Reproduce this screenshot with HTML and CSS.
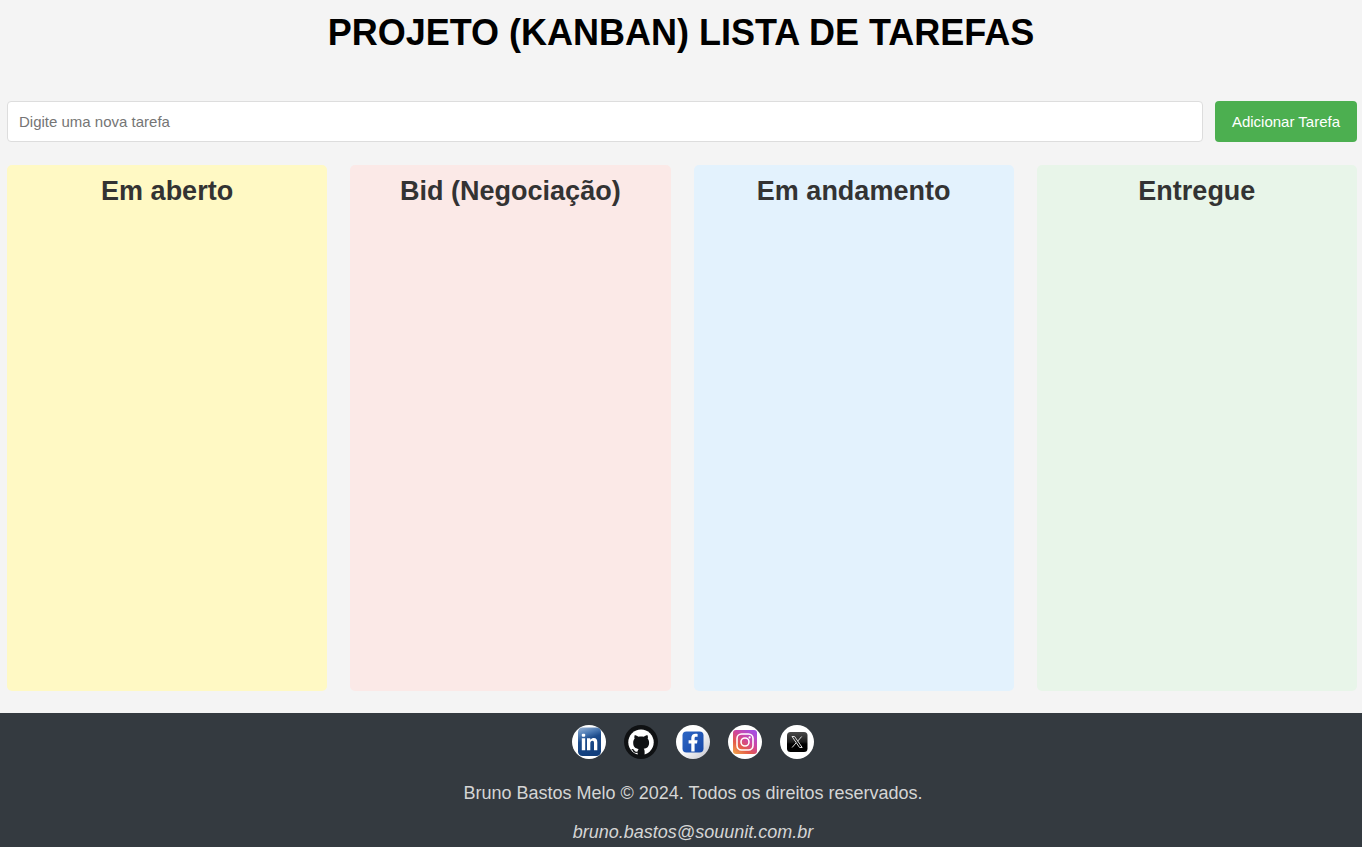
FILE: index.html
```html
<!DOCTYPE html>
<html lang="pt-BR">
<head>
<meta charset="utf-8">
<meta name="viewport" content="width=device-width, initial-scale=1">
<title>Projeto (Kanban) Lista de Tarefas</title>
<link rel="stylesheet" href="styles.css">
</head>
<body>
<header class="header"><h1 class="title">PROJETO (KANBAN) LISTA DE TAREFAS</h1></header>
<main class="main">
  <form class="task-form">
    <input class="task-input" type="text" aria-label="Nova tarefa" placeholder="Digite uma nova tarefa">
    <button class="task-button" type="button">Adicionar Tarefa</button>
  </form>
  <div class="board">
    <section class="column column-open"><h2 class="column-title">Em aberto</h2></section>
    <section class="column column-bid"><h2 class="column-title">Bid (Negociação)</h2></section>
    <section class="column column-progress"><h2 class="column-title">Em andamento</h2></section>
    <section class="column column-done"><h2 class="column-title">Entregue</h2></section>
  </div>
</main>
<footer class="footer">
  <nav class="social" aria-label="Redes sociais">
    <a class="social-link" href="#" aria-label="LinkedIn">
      <svg class="social-icon" viewBox="0 0 34 34">
        <defs><linearGradient id="li" x1="0" y1="0" x2=".3" y2="1"><stop offset="0" stop-color="#9cb6d6"/><stop offset=".3" stop-color="#4a78b2"/><stop offset=".5" stop-color="#1c4b8b"/><stop offset="1" stop-color="#123f7d"/></linearGradient></defs>
        <circle cx="17" cy="17" r="17" fill="#fff"/>
        <rect x="6" y="2.500" width="23" height="28.500" rx="4.500" fill="url(#li)"/>
        <rect x="9.800" y="8.800" width="3.400" height="3" rx="1" fill="#fff"/>
        <path d="M9.800 13.200h3.400v12H9.800zM15 13.200h3.300v1.500c1-1.300 2.200-1.800 3.500-1.800 2.600 0 3.500 1.700 3.500 4.400v7.900H22v-7.200c0-1.500-.5-2.300-1.600-2.300-1.300 0-2.100 1-2.100 2.500v7H15z" fill="#fff"/>
      </svg>
    </a>
    <a class="social-link" href="#" aria-label="GitHub">
      <svg class="social-icon" viewBox="0 0 34 34">
        <circle cx="17" cy="17" r="17" fill="#0f1113"/>
        <circle cx="17" cy="17.200" r="12.700" fill="#fff"/>
        <path fill="#0f1113" d="M10.600 10.200c1.500 0 2.800.7 4 1.500 1.600-.4 3.400-.4 5 0 1.200-.8 2.500-1.500 4-1.500.5 1.300.5 2.500.1 3.600 1 1.100 1.400 2.400 1.400 3.900 0 4.100-2.200 5.600-5.400 6.100.7.700.9 1.600.9 2.700v4.200h-7v-2.900c-3 .5-4-.5-4.800-2.100-.4-.8-.9-1.200-1.500-1.500 1.300-.4 2.200.1 3 1.200.8 1.200 1.900 1.500 3.300 1 .1-.9.400-1.900 1-2.500-3.200-.5-5.400-2-5.400-6.200 0-1.500.5-2.800 1.400-3.900-.4-1.100-.4-2.300 0-3.600z"/>
      </svg>
    </a>
    <a class="social-link" href="#" aria-label="Facebook">
      <svg class="social-icon" viewBox="0 0 34 34">
        <defs><linearGradient id="fb" x1="0" y1="0" x2="1" y2="1"><stop offset="0" stop-color="#2d66c4"/><stop offset="1" stop-color="#1748a8"/></linearGradient><linearGradient id="fbg" x1="0" y1="0" x2="1" y2="1"><stop offset=".45" stop-color="#fff"/><stop offset="1" stop-color="#c1c1ca"/></linearGradient></defs>
        <circle cx="17" cy="17" r="17" fill="url(#fbg)"/>
        <rect x="6.500" y="6.500" width="21" height="21" rx="4" fill="url(#fb)"/>
        <path d="M15.300 26.500v-8H12.600V15.300h2.700v-2.200c0-3 1.700-4.400 4.300-4.400.9 0 1.600.1 2 .2v2.900h-1.500c-1.200 0-1.500.6-1.500 1.500v2h2.900l-.5 3.200h-2.400v8z" fill="#fff"/>
      </svg>
    </a>
    <a class="social-link" href="#" aria-label="Instagram">
      <svg class="social-icon" viewBox="0 0 34 34">
        <defs><linearGradient id="ig" x1="0" y1="1" x2=".75" y2="0"><stop offset="0" stop-color="#f3ab4b"/><stop offset=".35" stop-color="#e45a48"/><stop offset=".65" stop-color="#ce45a0"/><stop offset="1" stop-color="#a64ee0"/></linearGradient></defs>
        <circle cx="17" cy="17" r="17" fill="#fff"/>
        <rect x="5" y="5" width="24" height="24" rx="3" fill="url(#ig)"/>
        <g fill="none" stroke="#fff" stroke-width="1.600"><rect x="9" y="9" width="16" height="16" rx="4.500"/><circle cx="17" cy="17" r="4"/></g>
        <circle cx="21.600" cy="12.400" r="1.100" fill="#fff"/>
      </svg>
    </a>
    <a class="social-link" href="#" aria-label="X">
      <svg class="social-icon" viewBox="0 0 34 34">
        <defs><linearGradient id="xg" x1="0" y1="0" x2="0" y2="1"><stop offset="0" stop-color="#4a4a4a"/><stop offset=".5" stop-color="#1c1c1c"/><stop offset=".6" stop-color="#000"/></linearGradient></defs>
        <circle cx="17" cy="17" r="17" fill="#fff"/>
        <rect x="7" y="7" width="20.500" height="20" rx="3.500" fill="url(#xg)"/>
        <path d="M12 11.500h2.600l7.600 11h-2.600zM21.700 11.500l-4.200 4.800M16.100 17.900l-4 4.600" fill="none" stroke="#ddd" stroke-width="1"/>
      </svg>
    </a>
  </nav>
  <p class="copyright">Bruno Bastos Melo © 2024. Todos os direitos reservados.</p>
  <p class="email">bruno.bastos@souunit.com.br</p>
</footer>
</body>
</html>
```
FILE: styles.css
```css
* {
  box-sizing: border-box;
  margin: 0;
}

body {
  display: flex;
  flex-direction: column;
  min-height: 100vh;
  background: #f4f4f4;
  font-family: "Liberation Sans", Arial, sans-serif;
}

.header {
  padding: 13px 0 48px;
  text-align: center;
}

.title {
  font-size: 36px;
  line-height: 40px;
  color: #000;
}

.main {
  display: flex;
  flex: 1;
  flex-direction: column;
  gap: 23px;
  padding: 0 5px 22px 7px;
}

.task-form {
  display: flex;
  gap: 12px;
}

.task-input,
.task-button {
  height: 41px;
  border-radius: 4px;
  font-family: inherit;
  font-size: 15px;
}

.task-input {
  flex: 1;
  min-width: 0;
  padding: 0 11px;
  border: 1px solid #ddd;
  background: #fff;
}

.task-input::placeholder {
  color: #757575;
}

.task-button {
  padding: 0 17px;
  border: 0;
  background: #4caf50;
  color: #fff;
  cursor: pointer;
}

.board {
  display: grid;
  flex: 1;
  grid-template-columns: repeat(4, 1fr);
  gap: 23px;
}

.column {
  padding: 10px;
  border-radius: 5px;
}

.column-open {
  background: #fff9c4;
}

.column-bid {
  background: #fbe9e7;
}

.column-progress {
  background: #e3f2fd;
}

.column-done {
  background: #e8f5e9;
}

.column-title {
  font-size: 27px;
  line-height: 32px;
  color: #333;
  text-align: center;
}

.footer {
  padding: 12px 0 4px 24px;
  background: #343a40;
  color: #d5d5d5;
  font-size: 18px;
  line-height: 22px;
  text-align: center;
}

.social {
  display: flex;
  justify-content: center;
  gap: 18px;
  margin-bottom: 23px;
}

.social-link,
.social-icon {
  display: block;
  width: 34px;
  height: 34px;
}

.copyright {
  margin-bottom: 17px;
}

.email {
  font-style: italic;
}
```
